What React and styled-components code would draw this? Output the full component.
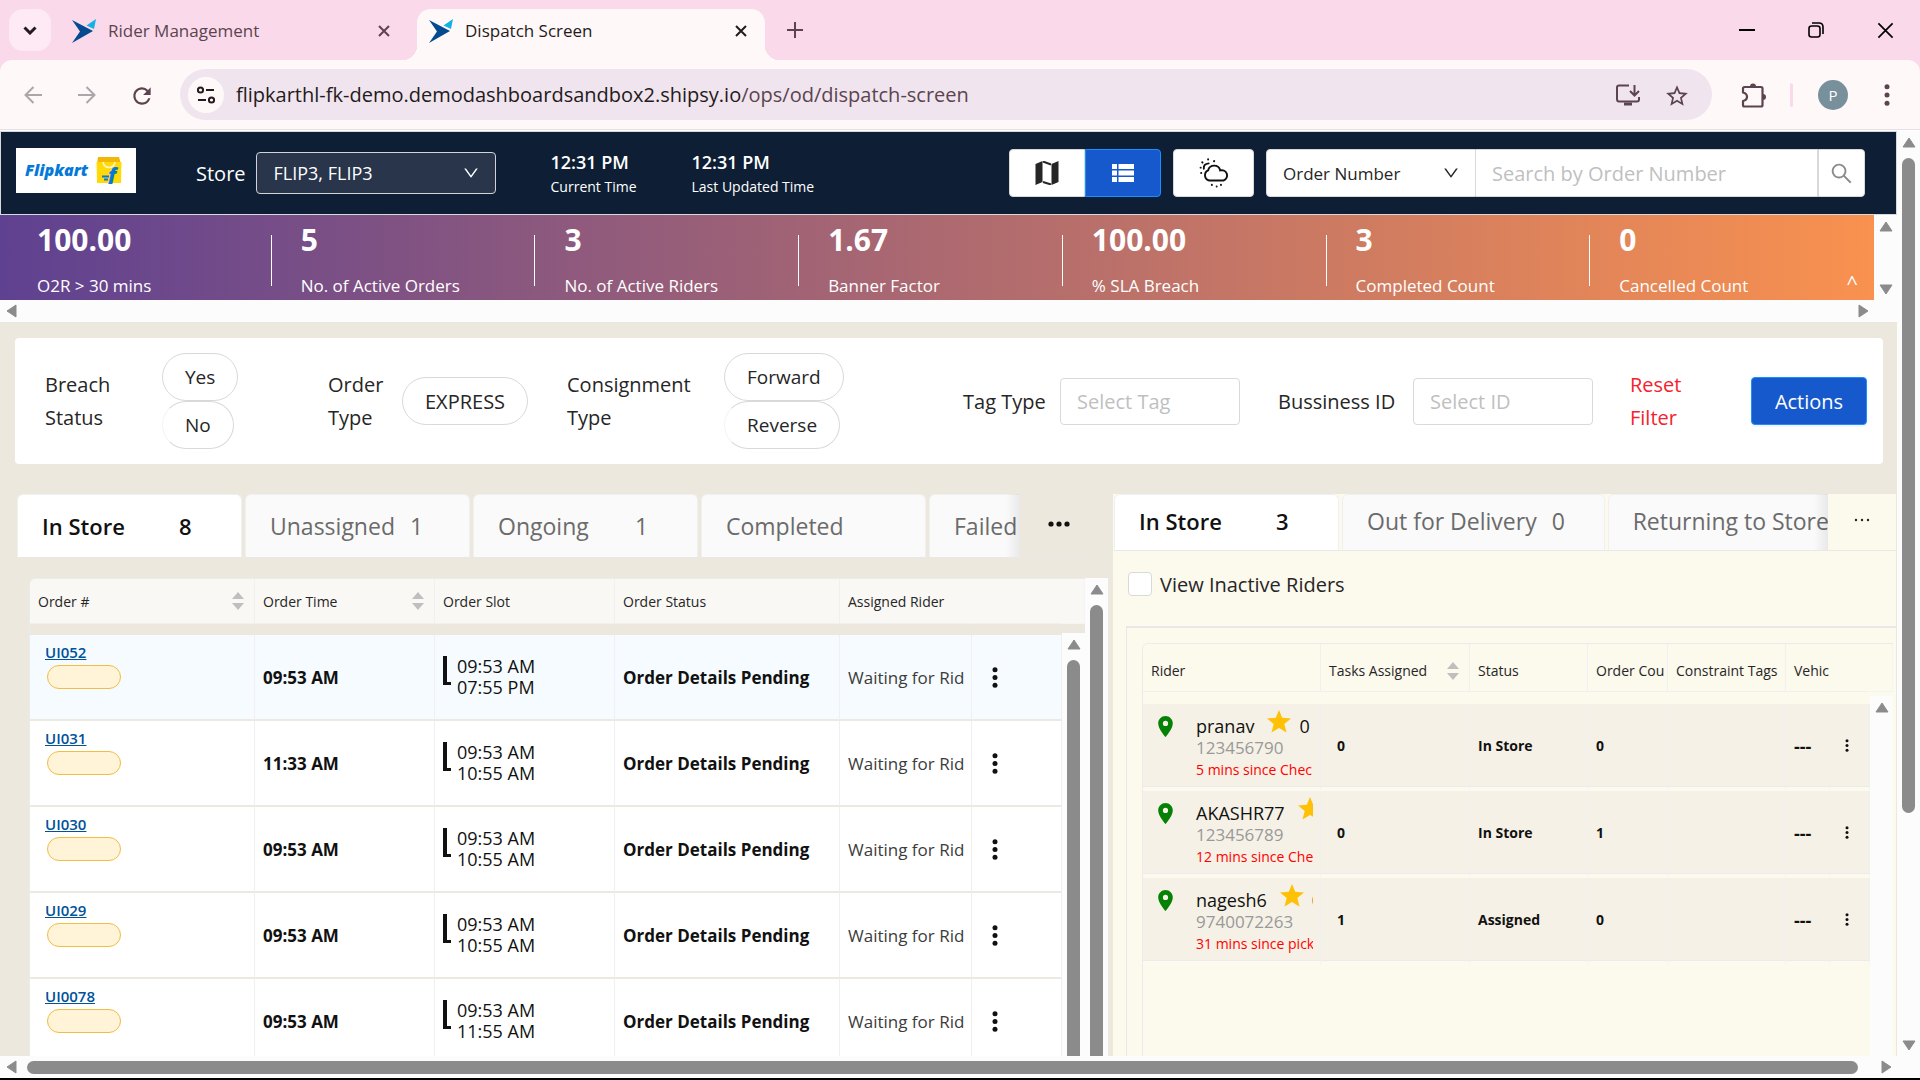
import React from 'react';
import styled, { createGlobalStyle, css } from 'styled-components';
import {
  AiOutlineDown,
  AiOutlineEllipsis,
  AiOutlineSearch,
} from 'react-icons/ai';
import { MdLocationOn, MdRefresh, MdStarBorder } from 'react-icons/md';

const GlobalStyle = createGlobalStyle`
  *, *::before, *::after {
    box-sizing: border-box;
  }

  body {
    margin: 0;
    font-family: 'Open Sans', 'Noto Sans', sans-serif;
    color: #262626;
  }

  button, input, select {
    font-family: inherit;
    margin: 0;
  }

  button {
    padding: 0;
    border: 0;
    background: none;
    color: inherit;
  }

  svg {
    display: block;
    flex: none;
  }
`;

const Window = styled.div`
  display: flex;
  flex-direction: column;
  height: 100vh;
  overflow: hidden;
  background: #fadaea;
`;

/* Browser chrome */

const TabStrip = styled.div`
  display: flex;
  align-items: center;
  height: 60px;
  flex: none;
  padding-left: 9px;
`;

const TabSearch = styled.button`
  display: grid;
  place-items: center;
  width: 42px;
  height: 42px;
  border-radius: 14px;
  background: #fdeaf4;
`;

const BrowserTab = styled.div`
  position: relative;
  display: flex;
  align-items: center;
  gap: 12px;
  width: 348px;
  height: 51px;
  margin-top: 9px;
  margin-left: 9px;
  padding: 0 15px 8px 12px;
  border-radius: 14px 14px 0 0;
  font-size: 17px;
  color: ${({ $active }) => ($active ? '#241a20' : '#5b4450')};

  ${({ $active }) =>
    $active &&
    css`
      background: #fff8f8;

      &::before,
      &::after {
        content: '';
        position: absolute;
        bottom: 0;
        width: 14px;
        height: 14px;
      }

      &::before {
        left: -14px;
        background: radial-gradient(circle at 0 0, transparent 14px, #fff8f8 14px);
      }

      &::after {
        right: -14px;
        background: radial-gradient(circle at 100% 0, transparent 14px, #fff8f8 14px);
      }
    `}
`;

const TabTitle = styled.span`
  flex: 1;
`;

const IconButton = styled.button`
  display: grid;
  place-items: center;
  width: ${({ $size }) => $size || 24}px;
  height: ${({ $size }) => $size || 24}px;
`;

const NewTab = styled(IconButton)`
  margin-left: 18px;
  color: #5b4450;
`;

const WindowControls = styled.div`
  display: flex;
  gap: 45px;
  margin-left: auto;
  padding-right: 23px;
  color: #000;
`;

const AddressBar = styled.div`
  display: flex;
  align-items: center;
  flex: none;
  height: 70px;
  padding: 0 22px 0 21px;
  border-radius: 12px 12px 0 0;
  border-bottom: 1px solid #e7dfe6;
  background: #fff8f8;
  color: #5b4450;
`;

const NavButtons = styled.div`
  display: flex;
  gap: 30px;
  margin-right: 27px;
`;

const UrlPill = styled.div`
  display: flex;
  align-items: center;
  flex: 1;
  height: 51px;
  padding: 0 24px 0 8px;
  border-radius: 26px;
  background: #f0e5ee;
`;

const SiteInfo = styled.button`
  display: grid;
  place-items: center;
  width: 36px;
  height: 36px;
  border-radius: 50%;
  background: #fff8f8;
  color: #241a20;
`;

const Url = styled.div`
  flex: 1;
  margin-left: 12px;
  font-size: 20px;
  color: #241a20;

  span {
    color: #5b4450;
  }
`;

const PillIcons = styled.div`
  display: flex;
  gap: 24px;
`;

const ProfileArea = styled.div`
  display: flex;
  align-items: center;
  margin-left: 29px;
`;

const ChromeDivider = styled.div`
  width: 3px;
  height: 24px;
  margin: 0 25px;
  border-radius: 2px;
  background: #fadaea;
`;

const Avatar = styled.button`
  width: 30px;
  height: 30px;
  margin-right: 28px;
  border-radius: 50%;
  background: #78909c;
  color: #fff;
  font-size: 15px;
`;

/* Scrollbars */

const Track = styled.div`
  display: flex;
  flex-direction: ${({ $horizontal }) => ($horizontal ? 'row' : 'column')};
  align-items: center;
  flex: ${({ $grow }) => ($grow ? '1' : 'none')};
  min-height: 0;
  background: #fcfcfc;
  color: #8b8b8b;
  ${({ $horizontal }) => ($horizontal ? 'height: 22px;' : 'width: 23px;')}
`;

const ArrowBox = styled.div`
  display: grid;
  place-items: center;
  flex: none;
  width: 23px;
  height: 23px;
`;

const Thumb = styled.div`
  flex: ${({ $grow }) => $grow};
  margin: ${({ $horizontal }) => ($horizontal ? '0 16px 0 4px' : '4px 0')};
  border-radius: ${({ $open }) => ($open ? '7px 7px 0 0' : '7px')};
  background: #8b8b8b;
  ${({ $horizontal }) => ($horizontal ? 'height: 13px;' : 'width: 13px;')}
  ${({ $open }) => $open && 'margin-bottom: 0;'}
`;

const Gap = styled.div`
  flex: ${({ $grow }) => $grow};
`;

const arrowPaths = {
  up: 'M7 2 L13 11 H1 Z',
  down: 'M7 12 L1 3 H13 Z',
  left: 'M2 7 L11 1 V13 Z',
  right: 'M12 7 L3 1 V13 Z',
};

const Arrow = ({ dir }) => (
  <ArrowBox>
    <svg width="14" height="14" viewBox="0 0 14 14" fill="currentColor">
      <path d={arrowPaths[dir]} stroke="currentColor" strokeLinejoin="round" />
    </svg>
  </ArrowBox>
);

/* Application */

const Viewport = styled.div`
  display: flex;
  flex: 1;
  min-height: 0;
  border-top: 1px solid #fff;
  background: #fcfcfc;
`;

const Page = styled.div`
  display: flex;
  flex-direction: column;
  flex: 1;
  min-width: 0;
  background: #ece8dd;
`;

const Header = styled.header`
  display: flex;
  align-items: center;
  gap: 12px;
  flex: none;
  height: 84px;
  padding: 0 31px 0 15px;
  border: 1px solid #d6dadb;
  background: #0e1f35;
  color: #fff;
`;

const HeaderInfo = styled.div`
  display: flex;
  align-items: center;
  gap: 55px;
  margin-right: auto;
`;

const Brand = styled.div`
  display: flex;
  align-items: center;
  gap: 8px;
  width: 120px;
  height: 45px;
  margin-top: -6px;
  padding-left: 9px;
  background: #fff;
  color: #0479d9;
  font-size: 16px;
  font-style: italic;
  font-weight: 800;
`;

const StoreField = styled.div`
  display: flex;
  align-items: center;
  gap: 10px;
  padding-left: 5px;
  font-size: 20px;
`;

const SelectBox = styled.div`
  display: grid;
  align-items: center;
  width: ${({ $width }) => $width}px;

  select,
  svg {
    grid-area: 1 / 1;
  }

  svg {
    justify-self: end;
    margin-right: 16px;
    pointer-events: none;
  }
`;

const StoreSelect = styled.select`
  height: 42px;
  padding: 0 17px;
  border: 1px solid #d0d3d8;
  border-radius: 4px;
  background: #28354a;
  color: #fff;
  font-size: 18px;
  appearance: none;
`;

const Clock = styled.div`
  font-size: 14px;
  line-height: 22px;

  strong {
    display: block;
    font-size: 18px;
    font-weight: 600;
    line-height: 28px;
  }
`;

const ViewToggle = styled.div`
  display: flex;
`;

const HeaderButton = styled.button`
  display: grid;
  place-items: center;
  width: ${({ $width }) => $width}px;
  height: 48px;
  border: 1px solid ${({ $on }) => ($on ? '#1890ff' : '#d9d9d9')};
  border-radius: ${({ $radius }) => $radius || '4px'};
  background: ${({ $on }) => ($on ? '#1659cc' : '#fff')};
  color: ${({ $on }) => ($on ? '#fff' : '#262626')};
`;

const SearchGroup = styled.div`
  display: flex;
`;

const FieldSelect = styled.select`
  height: 48px;
  padding: 0 16px;
  border: 1px solid #d9d9d9;
  border-radius: 4px 0 0 4px;
  background: #fff;
  color: #262626;
  font-size: 17px;
  appearance: none;
`;

const SearchInput = styled.input`
  width: 342px;
  height: 48px;
  padding: 0 16px;
  border: 1px solid #d9d9d9;
  border-left: 0;
  font-size: 20px;

  &::placeholder {
    color: #bfbfbf;
  }
`;

const KpiArea = styled.section`
  flex: none;
`;

const KpiRow = styled.div`
  display: flex;
`;

const KpiStrip = styled.div`
  position: relative;
  display: grid;
  grid-template-columns: repeat(7, 1fr);
  flex: 1;
  height: 85px;
  padding: 0 21px 0 7px;
  background: linear-gradient(to right, #5f4191, #f9914f);
  color: #fff;
`;

const Kpi = styled.div`
  padding: 5px 0 0 30px;
  font-size: 17px;
  line-height: 24px;

  & + & {
    background: linear-gradient(#fff, #fff) 0 20px / 1px 51px no-repeat;
  }

  strong {
    display: block;
    margin-bottom: 14px;
    font-size: 30px;
    font-weight: 700;
    line-height: 40px;
  }
`;

const Collapse = styled.button`
  position: absolute;
  right: 16px;
  bottom: 4px;
  font-size: 20px;
`;

const Spread = styled(Track)`
  justify-content: space-between;
  padding-right: 23px;
`;

const FilterCard = styled.section`
  display: grid;
  grid-template-columns: 283fr 239fr 396fr 315fr 352fr 121fr auto;
  align-items: center;
  flex: none;
  min-height: 126px;
  margin: 16px 14px 30px 15px;
  padding: 15px 16px 15px 30px;
  border-radius: 4px;
  background: #fff;
  font-size: 20px;
  line-height: 33px;
`;

const Filter = styled.div`
  display: flex;
  align-items: center;
`;

const FilterLabel = styled.label`
  flex: none;
  width: ${({ $width }) => $width}px;
`;

const Pills = styled.div`
  display: flex;
  flex-direction: column;
  align-items: flex-start;
`;

const Pill = styled.button`
  height: 48px;
  padding: 0 22px;
  border: 1px solid #d9d9d9;
  border-radius: 24px;
  font-size: ${({ $caps }) => ($caps ? 20 : 19)}px;

  & + & {
    border-left-color: #f4f4f4;
  }
`;

const FilterInput = styled.input`
  width: 180px;
  height: 47px;
  padding: 0 16px;
  border: 1px solid #d9d9d9;
  border-radius: 4px;
  font-size: 20px;

  &::placeholder {
    color: #bfbfbf;
  }
`;

const ResetButton = styled.button`
  width: 70px;
  color: #f5222d;
  font-size: 20px;
  line-height: 33px;
  text-align: left;
`;

const ActionsButton = styled.button`
  width: 116px;
  height: 48px;
  border: 1px solid #1890ff;
  border-radius: 4px;
  background: #1659cc;
  box-shadow: 0 2px 0 rgba(0, 0, 0, 0.04);
  color: #fff;
  font-size: 20px;
`;

const Panels = styled.main`
  display: grid;
  grid-template-columns: minmax(0, 1113fr) minmax(0, 784fr);
  flex: 1;
  min-height: 0;
`;

const Panel = styled.section`
  display: flex;
  flex-direction: column;
  min-height: 0;
  ${({ $riders }) =>
    $riders
      ? css`
          padding-left: 1px;
          background: #fcf9ed;
          margin-right: 1px;
        `
      : css`
          padding-left: 17px;
        `}
`;

const TabRow = styled.div`
  display: flex;
  flex: none;
  height: ${({ $height }) => $height}px;
  margin-right: ${({ $right }) => $right || 0}px;
  border-bottom: 1px solid #e8e8e8;
`;

const TabList = styled.div`
  position: relative;
  display: flex;
  gap: 3px;
  flex: 1;
  min-width: 0;
  overflow: hidden;

  &::after {
    content: '';
    position: absolute;
    top: 0;
    right: 0;
    bottom: 0;
    width: 14px;
    background: linear-gradient(to right, transparent, rgba(0, 0, 0, 0.07));
  }
`;

const PanelTab = styled.button`
  display: flex;
  align-items: center;
  gap: 15px;
  flex: none;
  min-width: 225px;
  padding: 0 24px ${({ $bottom }) => $bottom}px;
  border: 1px solid #f0f0f0;
  border-bottom: 0;
  border-radius: 6px 6px 0 0;
  background: ${({ $active }) => ($active ? '#fff' : '#fafafa')};
  color: ${({ $active }) => ($active ? '#111' : '#6b6b6b')};
  font-size: ${({ $active }) => ($active ? 22 : 23)}px;
  font-weight: ${({ $active }) => ($active ? 600 : 400)};
  white-space: nowrap;
  text-align: left;

  span:first-child {
    min-width: 122px;
  }

  span:last-child {
    min-width: 28px;
  }
`;

const MoreTabs = styled.button`
  display: grid;
  place-items: center;
  width: ${({ $width }) => $width}px;
  padding-bottom: 4px;
`;

const OrdersArea = styled.div`
  display: flex;
  flex: 1;
  min-height: 0;
  margin: 20px 5px 0 12px;
  overflow: hidden;
`;

const TableFrame = styled.div`
  display: flex;
  flex: 1;
  min-width: 0;
  overflow: hidden;
  border: solid #ebebeb;
  border-width: 1px 0 0 1px;
  border-radius: 6px 0 0 0;
`;

const TableSide = styled.div`
  display: flex;
  flex-direction: column;
  width: 23px;
`;

const SideHead = styled.div`
  flex: none;
  height: ${({ $height }) => $height}px;
  margin-bottom: ${({ $after }) => $after}px;
  border: solid #f4f4f4;
  border-width: 0 1px 1px 0;
  background: ${({ $color }) => $color};
`;

const Table = styled.table`
  flex: 1;
  width: 100%;
  min-width: 0;
  align-self: flex-start;
  table-layout: fixed;
  border-spacing: 0;
  font-size: ${({ $size }) => $size}px;

  th,
  td {
    padding: 0 0 0 8px;
    border-right: 1px solid #f0f0f0;
    overflow: hidden;
    text-align: left;
    white-space: nowrap;
  }

  th {
    height: ${({ $head }) => $head}px;
    padding-top: ${({ $headTop }) => $headTop || 0}px;
    border-bottom: 1px solid #f0f0f0;
    background: ${({ $headColor }) => $headColor};
    font-size: 14px;
    font-weight: 500;
  }

  th:nth-last-child(-n + 2) {
    border-right-color: transparent;
  }

  tbody::before {
    content: '';
    display: block;
    height: ${({ $gap }) => $gap}px;
  }
`;

const OrderTr = styled.tr`
  td {
    height: 86px;
    border-bottom: 2px solid #ece9e2;
    background: ${({ $hover }) => ($hover ? '#f5fbfe' : '#fff')};
    color: #3c3c3c;
    font-weight: 500;
  }
`;

const RiderTr = styled.tr`
  td {
    height: 87px;
    border-bottom: 4px solid #fcf9ed;
    background: #f5f1e6;
    box-shadow: inset 0 -1px 0 #ebebef;
  }
`;

const HeadCell = styled.div`
  display: flex;
  align-items: center;
  justify-content: space-between;
  padding-right: 10px;
`;

const Strong = styled.strong`
  color: #111;
  font-weight: 700;
`;

const Dashes = styled(Strong)`
  font-size: 18px;
`;

const OrderCell = styled.div`
  height: 70px;
  padding-left: 7px;
`;

const OrderLink = styled.a`
  display: block;
  width: fit-content;
  color: #00529b;
  font-size: 15px;
  font-weight: 600;
  line-height: 20px;
`;

const OrderBadge = styled.div`
  width: 74px;
  height: 24px;
  margin: 3px 2px;
  border: 1px solid #f0bd45;
  border-radius: 12px;
  background: #fff3d8;
`;

const Slot = styled.div`
  display: flex;
  gap: 6px;
  color: #111;
  font-size: 18px;
  line-height: 21px;

  &::before {
    content: '';
    width: 8px;
    height: 29px;
    border: solid #111;
    border-width: 0 0 3px 4px;
  }
`;

const RowMenu = styled(IconButton)`
  color: #111;
  margin-left: ${({ $left }) => $left}px;
`;

const InactiveRow = styled.label`
  display: flex;
  align-items: center;
  gap: 8px;
  flex: none;
  height: 66px;
  margin: 0 0 9px 14px;
  font-size: 20px;
`;

const Checkbox = styled.input`
  width: 24px;
  height: 24px;
  margin: 0;
  border: 1px solid #d9d9d9;
  border-radius: 4px;
  background: #fff;
  appearance: none;
`;

const RidersArea = styled.div`
  display: flex;
  flex: 1;
  min-height: 0;
  margin-left: 12px;
  padding: 15px 3px 0 15px;
  border-top: 2px solid #e8e8e8;
  border-left: 1px solid #e8e8e8;
  overflow: hidden;
`;

const RiderCell = styled.div`
  display: flex;
  margin-right: 7px;
  padding-left: 2px;
  overflow: hidden;

  > svg {
    margin-top: 4px;
  }
`;

const RiderInfo = styled.div`
  width: 0;
  flex: 1;
  margin-left: 18px;
  font-size: 17px;
  line-height: 21px;
`;

const RiderName = styled.div`
  display: flex;
  align-items: flex-end;
  color: #111;
  font-size: 18px;

  svg {
    margin: 0 8px 4px 13px;
  }
`;

const Phone = styled.div`
  color: #999;
`;

const Since = styled.div`
  color: #f00;
  font-size: 14px;
  line-height: 24px;
`;

const Inset = styled.div`
  padding-left: 8px;
`;

const BottomBar = styled.div`
  flex: none;
  padding-right: 23px;
  border-bottom: 2px solid #000;
  background: #fcfcfc;
`;

/* Icons */

const ShipsyLogo = () => (
  <svg width="24" height="24" viewBox="0 0 24 24">
    <path d="M0 1 L21 12 L0 24 L8 12.500 Z" fill="#034a91" />
    <path d="M24 0 L22 10 L14.500 6.500 Z" fill="#14b1e7" />
  </svg>
);

const CloseIcon = ({ size = 12, width = 2 }) => (
  <svg width={size} height={size} viewBox="0 0 12 12" stroke="currentColor" strokeWidth={width}>
    <path d="M1 1 L11 11 M11 1 L1 11" />
  </svg>
);

const ChevronIcon = () => (
  <svg width="14" height="9" viewBox="0 0 14 9" fill="none" stroke="#241a20" strokeWidth="3">
    <path d="M1.500 1.500 L7 7 L12.500 1.500" />
  </svg>
);

const ArrowIcon = ({ flip }) => (
  <svg width="18" height="18" viewBox="0 0 18 18" fill="none" stroke="#ada5a9" strokeWidth="2">
    <path d={flip ? 'M0 9 H16 M8.500 1 L16.500 9 L8.500 17' : 'M18 9 H2 M9.500 1 L1.500 9 L9.500 17'} />
  </svg>
);

const TuneIcon = () => (
  <svg width="20" height="18" viewBox="0 0 20 18" fill="none" stroke="currentColor" strokeWidth="2">
    <circle cx="4.500" cy="4" r="2.600" />
    <circle cx="15.500" cy="14" r="2.600" />
    <path d="M10 4 H18 M2 14 H10" />
  </svg>
);

const InstallIcon = () => (
  <svg width="24" height="24" viewBox="0 0 24 24" fill="none" stroke="currentColor" strokeWidth="2">
    <path d="M13 2.500 H3 Q1 2.500 1 4.500 V16 Q1 18.500 3 18.500 H21 Q23 18.500 23 16.500 V14" />
    <path d="M18.500 2 V12 M14 8 L18.500 12.500 L23 8" />
    <path d="M8 21 H16" strokeWidth="3" />
  </svg>
);

const PuzzleIcon = () => (
  <svg width="26" height="26" viewBox="0 0 26 26" fill="none" stroke="currentColor" strokeWidth="2.200">
    <path
      d="M3.500 4 H20 Q21.500 4 21.500 5.500 V22 Q21.500 23.500 20 23.500 H3.500 Q2 23.500 2 22 V18 Q6 17 6 13.700 Q6 10.500 2 9.500 V5.500 Q2 4 3.500 4 Z"
      strokeLinejoin="round"
    />
    <path d="M9 3.500 a3 3 0 0 1 6 0 Z M22 11 a3 3 0 0 1 0 6 Z" fill="currentColor" stroke="none" />
  </svg>
);

const RestoreIcon = () => (
  <svg width="16" height="16" viewBox="0 0 16 16" fill="none" stroke="currentColor" strokeWidth="1.600">
    <rect x="1" y="4" width="11" height="11" rx="2.500" />
    <path d="M4 1 H11 Q15 1 15 5 V12" />
  </svg>
);

const BagIcon = () => (
  <svg width="26" height="27" viewBox="0 0 26 27">
    <path d="M2 0 H23 L25 7 H1 Z" fill="#f2b705" />
    <path d="M0.500 5 H25.500 L25 26 H1 Z" fill="#ffd90a" />
    <path d="M7 5 Q8 10.500 13 10.500 Q18 10.500 19 5" fill="none" stroke="#fff6c4" strokeWidth="1.500" />
    <path d="M6 19.500 H13 M8 22.500 H12" stroke="#0479d9" strokeWidth="2" />
    <text x="12" y="25" fontSize="20" fontWeight="800" fontStyle="italic" fill="#0479d9">
      f
    </text>
  </svg>
);

const MapIcon = () => (
  <svg width="24" height="24" viewBox="0 0 24 24" fill="currentColor">
    <path d="M0.500 3 L7.500 0 V21 L0.500 24 Z M16.500 3 L23.500 0 V21 L16.500 24 Z" />
    <path d="M8 0.500 L16 3.500 M8 21 L16 23.500" stroke="currentColor" strokeWidth="2" />
  </svg>
);

const ListIcon = () => (
  <svg width="22" height="18" viewBox="0 0 22 18" fill="currentColor">
    <path d="M0 0 H5 V5 H0 Z M6.500 0 H22 V5 H6.500 Z M0 6.500 H5 V11.500 H0 Z M6.500 6.500 H22 V11.500 H6.500 Z M0 13 H5 V18 H0 Z M6.500 13 H22 V18 H6.500 Z" />
  </svg>
);

const WeatherIcon = () => (
  <svg
    width="30"
    height="30"
    viewBox="0 0 28 28"
    fill="none"
    stroke="#111"
    strokeWidth="1.800"
    strokeLinecap="round"
  >
    <path d="M9.500 21 a5 5 0 0 1 -1 -9.400 a5.800 5.800 0 0 1 11.300 0 a4.900 4.900 0 0 1 3 9.400 Z" />
    <path d="M4.500 10 Q4 5.500 9 5" />
    <path d="M1.500 9 h.1 M3 4 l.3 .3 M8.500 1.200 v.3 M14 3 l.2 -.2 M2 14 h.1" />
    <path d="M12 25 v.2 M16.500 26.500 v.2 M20.500 25 v.2" />
  </svg>
);

const Sorter = () => (
  <svg width="12" height="18" viewBox="0 0 12 18" fill="#bfbfbf">
    <path d="M6 0 L12 7 H0 Z M6 18 L0 11 H12 Z" />
  </svg>
);

const DotsIcon = ({ size }) => (
  <svg width="6" height={size} viewBox={`0 0 6 ${size}`} fill="currentColor">
    {[0.130, 0.500, 0.870].map((y) => (
      <circle key={y} cx="3" cy={size * y} r={size > 15 ? 2.500 : 1.500} />
    ))}
  </svg>
);

const MoreIcon = () => (
  <svg width="22" height="6" viewBox="0 0 22 6" fill="#111">
    <circle cx="3" cy="3" r="2.600" />
    <circle cx="11" cy="3" r="2.600" />
    <circle cx="19" cy="3" r="2.600" />
  </svg>
);

const StarIcon = () => (
  <svg width="24" height="23" viewBox="0 0 24 23" fill="#ffc107">
    <path d="M12 0 L15.200 7.800 L24 8.500 L17.300 14 L19.500 22.500 L12 18 L4.500 22.500 L6.700 14 L0 8.500 L8.800 7.800 Z" />
  </svg>
);

const kpis = [
  ['100.00', 'O2R > 30 mins'],
  ['5', 'No. of Active Orders'],
  ['3', 'No. of Active Riders'],
  ['1.67', 'Banner Factor'],
  ['100.00', '% SLA Breach'],
  ['3', 'Completed Count'],
  ['0', 'Cancelled Count'],
];

const orders = [
  { id: 'UI052', time: '09:53 AM', from: '09:53 AM', to: '07:55 PM' },
  { id: 'UI031', time: '11:33 AM', from: '09:53 AM', to: '10:55 AM' },
  { id: 'UI030', time: '09:53 AM', from: '09:53 AM', to: '10:55 AM' },
  { id: 'UI029', time: '09:53 AM', from: '09:53 AM', to: '10:55 AM' },
  { id: 'UI0078', time: '09:53 AM', from: '09:53 AM', to: '11:55 AM' },
];

const riders = [
  { name: 'pranav', phone: '123456790', since: '5 mins since Chec', tasks: 0, status: 'In Store', count: 0 },
  { name: 'AKASHR77', phone: '123456789', since: '12 mins since Che', tasks: 0, status: 'In Store', count: 1 },
  { name: 'nagesh6', phone: '9740072263', since: '31 mins since pick', tasks: 1, status: 'Assigned', count: 0 },
];

const orderTabs = [
  ['In Store', 8],
  ['Unassigned', 1],
  ['Ongoing', 1],
  ['Completed', ''],
  ['Failed', ''],
];

const riderTabs = [
  ['In Store', 3],
  ['Out for Delivery', 0],
  ['Returning to Store', ''],
];

const Cols = ({ widths }) => (
  <colgroup>
    {widths.map((w, i) => (
      <col key={i} style={{ width: w }} />
    ))}
  </colgroup>
);

const Tabs = ({ items, bottom = 0 }) => (
  <TabList role="tablist">
    {items.map(([label, count], i) => (
      <PanelTab
        key={label}
        role="tab"
        aria-selected={i === 0}
        $active={i === 0}
        $bottom={bottom}
      >
        <span>{label}</span>
        <span>{count}</span>
      </PanelTab>
    ))}
  </TabList>
);

const BrowserChrome = () => (
  <>
    <TabStrip>
      <TabSearch aria-label="Search tabs">
        <ChevronIcon />
      </TabSearch>
      <BrowserTab>
        <ShipsyLogo />
        <TabTitle>Rider Management</TabTitle>
        <IconButton $size={18} aria-label="Close tab">
          <CloseIcon />
        </IconButton>
      </BrowserTab>
      <BrowserTab $active>
        <ShipsyLogo />
        <TabTitle>Dispatch Screen</TabTitle>
        <IconButton $size={18} aria-label="Close tab">
          <CloseIcon />
        </IconButton>
      </BrowserTab>
      <NewTab aria-label="New tab">
        <svg width="16" height="16" viewBox="0 0 16 16" stroke="currentColor" strokeWidth="2">
          <path d="M8 0 V16 M0 8 H16" />
        </svg>
      </NewTab>
      <WindowControls>
        <IconButton aria-label="Minimize">
          <svg width="16" height="2">
            <rect width="16" height="2" />
          </svg>
        </IconButton>
        <IconButton aria-label="Restore">
          <RestoreIcon />
        </IconButton>
        <IconButton aria-label="Close">
          <CloseIcon size={17} width={1.200} />
        </IconButton>
      </WindowControls>
    </TabStrip>
    <AddressBar>
      <NavButtons>
        <IconButton aria-label="Back">
          <ArrowIcon />
        </IconButton>
        <IconButton aria-label="Forward">
          <ArrowIcon flip />
        </IconButton>
        <IconButton aria-label="Reload">
          <MdRefresh size={26} />
        </IconButton>
      </NavButtons>
      <UrlPill>
        <SiteInfo aria-label="Site information">
          <TuneIcon />
        </SiteInfo>
        <Url>
          flipkarthl-fk-demo.demodashboardsandbox2.shipsy.io<span>/ops/od/dispatch-screen</span>
        </Url>
        <PillIcons>
          <IconButton aria-label="Install app">
            <InstallIcon />
          </IconButton>
          <IconButton aria-label="Bookmark">
            <MdStarBorder size={26} />
          </IconButton>
        </PillIcons>
      </UrlPill>
      <ProfileArea>
        <IconButton aria-label="Extensions">
          <PuzzleIcon />
        </IconButton>
        <ChromeDivider />
        <Avatar>P</Avatar>
      </ProfileArea>
      <IconButton aria-label="Menu" $size={22}>
        <DotsIcon size={22} />
      </IconButton>
    </AddressBar>
  </>
);

const AppHeader = () => (
  <Header>
    <HeaderInfo>
      <Brand>
        Flipkart
        <BagIcon />
      </Brand>
      <StoreField>
        <label htmlFor="store">Store</label>
        <SelectBox $width={240}>
          <StoreSelect id="store">
            <option>FLIP3, FLIP3</option>
          </StoreSelect>
          <AiOutlineDown size={18} />
        </SelectBox>
      </StoreField>
      <Clock>
        <strong>12:31 PM</strong>
        Current Time
      </Clock>
      <Clock>
        <strong>12:31 PM</strong>
        Last Updated Time
      </Clock>
    </HeaderInfo>
    <ViewToggle>
      <HeaderButton $width={76} $radius="4px 0 0 4px" aria-label="Map view">
        <MapIcon />
      </HeaderButton>
      <HeaderButton $width={76} $radius="0 4px 4px 0" $on aria-label="List view">
        <ListIcon />
      </HeaderButton>
    </ViewToggle>
    <HeaderButton $width={81} aria-label="Weather">
      <WeatherIcon />
    </HeaderButton>
    <SearchGroup>
      <SelectBox $width={210}>
        <FieldSelect aria-label="Search field">
          <option>Order Number</option>
        </FieldSelect>
        <AiOutlineDown size={18} color="#262626" />
      </SelectBox>
      <SearchInput aria-label="Search" placeholder="Search by Order Number" />
      <HeaderButton $width={47} $radius="0 4px 4px 0" aria-label="Search orders">
        <AiOutlineSearch size={25} color="#8a8a8a" />
      </HeaderButton>
    </SearchGroup>
  </Header>
);

const KpiBanner = () => (
  <KpiArea>
    <KpiRow>
      <KpiStrip>
        {kpis.map(([value, label]) => (
          <Kpi key={label}>
            <strong>{value}</strong>
            {label}
          </Kpi>
        ))}
        <Collapse aria-label="Collapse">^</Collapse>
      </KpiStrip>
      <Track>
        <Arrow dir="up" />
        <Gap $grow={1} />
        <Arrow dir="down" />
      </Track>
    </KpiRow>
    <Spread $horizontal>
      <Arrow dir="left" />
      <Arrow dir="right" />
    </Spread>
  </KpiArea>
);

const Filters = () => (
  <FilterCard>
    <Filter>
      <FilterLabel as="span" $width={117}>
        Breach Status
      </FilterLabel>
      <Pills>
        <Pill>Yes</Pill>
        <Pill>No</Pill>
      </Pills>
    </Filter>
    <Filter>
      <FilterLabel as="span" $width={74}>
        Order Type
      </FilterLabel>
      <Pills>
        <Pill $caps>EXPRESS</Pill>
      </Pills>
    </Filter>
    <Filter>
      <FilterLabel as="span" $width={157}>
        Consignment Type
      </FilterLabel>
      <Pills>
        <Pill>Forward</Pill>
        <Pill>Reverse</Pill>
      </Pills>
    </Filter>
    <Filter>
      <FilterLabel htmlFor="tag" $width={97}>
        Tag Type
      </FilterLabel>
      <FilterInput id="tag" placeholder="Select Tag" />
    </Filter>
    <Filter>
      <FilterLabel htmlFor="business" $width={135}>
        Bussiness ID
      </FilterLabel>
      <FilterInput id="business" placeholder="Select ID" />
    </Filter>
    <ResetButton>Reset Filter</ResetButton>
    <ActionsButton>Actions</ActionsButton>
  </FilterCard>
);

const Orders = () => (
  <Panel>
    <TabRow $height={64} $right={15}>
      <Tabs items={orderTabs} />
      <MoreTabs $width={78} aria-label="More tabs">
        <MoreIcon />
      </MoreTabs>
    </TabRow>
    <OrdersArea>
      <TableFrame>
        <Table $size={17} $head={45} $gap={11} $headColor="#f9f8f4">
          <Cols widths={['225px', '180px', '180px', '225px', '132px', 'auto']} />
          <thead>
            <tr>
              <th>
                <HeadCell>
                  Order # <Sorter />
                </HeadCell>
              </th>
              <th>
                <HeadCell>
                  Order Time <Sorter />
                </HeadCell>
              </th>
              <th>Order Slot</th>
              <th>Order Status</th>
              <th>Assigned Rider</th>
              <th />
            </tr>
          </thead>
          <tbody>
            {orders.map((order, i) => (
              <OrderTr key={order.id} $hover={i === 0}>
                <td>
                  <OrderCell>
                    <OrderLink href={`#${order.id}`}>{order.id}</OrderLink>
                    <OrderBadge />
                  </OrderCell>
                </td>
                <td>
                  <Strong>{order.time}</Strong>
                </td>
                <td>
                  <Slot>
                    <div>
                      {order.from}
                      <br />
                      {order.to}
                    </div>
                  </Slot>
                </td>
                <td>
                  <Strong>Order Details Pending</Strong>
                </td>
                <td>Waiting for Rid</td>
                <td>
                  <RowMenu $left={3} aria-label="Order actions">
                    <DotsIcon size={21} />
                  </RowMenu>
                </td>
              </OrderTr>
            ))}
          </tbody>
        </Table>
        <TableSide>
          <SideHead $height={45} $after={9} $color="#f9f8f4" />
          <Track $grow>
            <Arrow dir="up" />
            <Thumb $grow={1} $open />
          </Track>
        </TableSide>
      </TableFrame>
      <Track>
        <Arrow dir="up" />
        <Thumb $grow={1} $open />
      </Track>
    </OrdersArea>
  </Panel>
);

const Riders = () => (
  <Panel $riders>
    <TabRow $height={57}>
      <Tabs items={riderTabs} bottom={4} />
      <MoreTabs $width={68} aria-label="More tabs">
        <AiOutlineEllipsis size={22} />
      </MoreTabs>
    </TabRow>
    <InactiveRow>
      <Checkbox type="checkbox" />
      View Inactive Riders
    </InactiveRow>
    <RidersArea>
      <TableFrame>
        <Table $size={14} $head={48} $headTop={6} $gap={12} $headColor="#fcf9ed">
          <Cols widths={['178px', '149px', '118px', '80px', '118px', '44px', 'auto']} />
          <thead>
            <tr>
              <th>Rider</th>
              <th>
                <HeadCell>
                  Tasks Assigned <Sorter />
                </HeadCell>
              </th>
              <th>Status</th>
              <th>Order Cou</th>
              <th>Constraint Tags</th>
              <th>Vehic</th>
              <th />
            </tr>
          </thead>
          <tbody>
            {riders.map((rider) => (
              <RiderTr key={rider.name}>
                <td>
                  <RiderCell>
                    <MdLocationOn size={25} color="#058205" />
                    <RiderInfo>
                      <RiderName>
                        {rider.name}
                        <StarIcon />0
                      </RiderName>
                      <Phone>{rider.phone}</Phone>
                      <Since>{rider.since}</Since>
                    </RiderInfo>
                  </RiderCell>
                </td>
                <td>
                  <Inset>
                    <Strong>{rider.tasks}</Strong>
                  </Inset>
                </td>
                <td>
                  <Strong>{rider.status}</Strong>
                </td>
                <td>
                  <Strong>{rider.count}</Strong>
                </td>
                <td />
                <td>
                  <Dashes>---</Dashes>
                </td>
                <td>
                  <RowMenu $size={18} $left={0} aria-label="Rider actions">
                    <DotsIcon size={13} />
                  </RowMenu>
                </td>
              </RiderTr>
            ))}
          </tbody>
        </Table>
        <TableSide>
          <SideHead $height={48} $after={4} $color="#fcf9ed" />
          <Track $grow>
            <Arrow dir="up" />
          </Track>
        </TableSide>
      </TableFrame>
    </RidersArea>
  </Panel>
);

const App = () => {
  return (
    <Window>
      <GlobalStyle />
      <BrowserChrome />
      <Viewport>
        <Page>
          <AppHeader />
          <KpiBanner />
          <Filters />
          <Panels>
            <Orders />
            <Riders />
          </Panels>
        </Page>
        <Track>
          <Arrow dir="up" />
          <Thumb $grow={655} />
          <Gap $grow={216} />
          <Arrow dir="down" />
        </Track>
      </Viewport>
      <BottomBar>
        <Track $horizontal>
          <Arrow dir="left" />
          <Thumb $horizontal $grow={1} />
          <Arrow dir="right" />
        </Track>
      </BottomBar>
    </Window>
  );
};

export default App;
